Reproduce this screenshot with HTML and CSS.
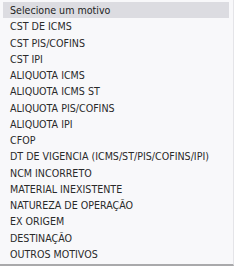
FILE: index.html
```html
<!DOCTYPE html>
<html lang="pt-BR">
<head>
    <meta charset="UTF-8">
    <title>Motivo</title>
    <link rel="stylesheet" href="styles.css">
</head>
<body>
    <ul class="motivos">
        <li class="motivo selected">Selecione um motivo</li>
        <li class="motivo">CST DE ICMS</li>
        <li class="motivo">CST PIS/COFINS</li>
        <li class="motivo">CST IPI</li>
        <li class="motivo">ALIQUOTA ICMS</li>
        <li class="motivo">ALIQUOTA ICMS ST</li>
        <li class="motivo">ALIQUOTA PIS/COFINS</li>
        <li class="motivo">ALIQUOTA IPI</li>
        <li class="motivo">CFOP</li>
        <li class="motivo">DT DE VIGENCIA (ICMS/ST/PIS/COFINS/IPI)</li>
        <li class="motivo">NCM INCORRETO</li>
        <li class="motivo">MATERIAL INEXISTENTE</li>
        <li class="motivo">NATUREZA DE OPERAÇÃO</li>
        <li class="motivo">EX ORIGEM</li>
        <li class="motivo">DESTINAÇÃO</li>
        <li class="motivo">OUTROS MOTIVOS</li>
    </ul>
</body>
</html>
```

FILE: styles.css
```css
body {
    margin: 0;
    background: #f8f8fa;
    font-family: "DejaVu Sans Condensed", "DejaVu Sans", sans-serif;
}

.motivos {
    list-style: none;
    margin: 0;
    padding: 2px 4px 0 3px;
    height: 266px;
    box-sizing: border-box;
    border-bottom: 2px solid #a9a9ab;
    border-right: 1px solid #e4e4e8;
}

.motivo {
    height: 16.27px;
    line-height: 16.27px;
    padding-left: 7px;
    font-size: 10.6px;
    color: #2a2a2a;
    white-space: nowrap;
}

.selected {
    background: #dcdce1;
    color: #1e1e1e;
}
```
